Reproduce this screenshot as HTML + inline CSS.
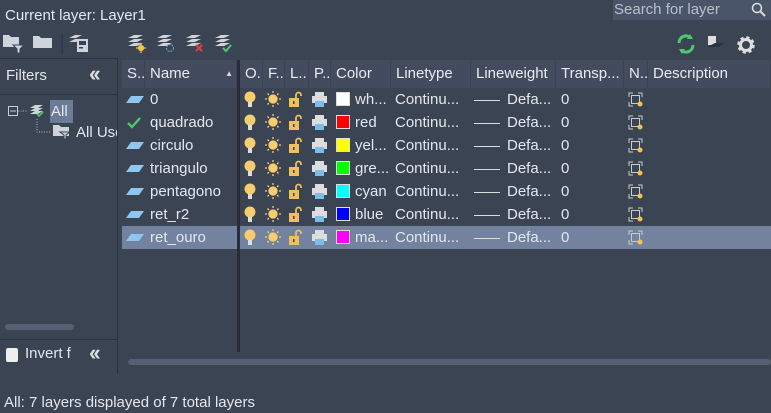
<!DOCTYPE html><html><head><style>
body{margin:0;width:771px;height:413px;background:#3b4453;font-family:"Liberation Sans",sans-serif;color:#e4e8ee;font-size:15px;position:relative;overflow:hidden}
.a{position:absolute;white-space:nowrap}
.hd{position:absolute;top:60px;height:28px;background:#434c5e;line-height:28px;padding-left:5px;box-sizing:border-box;border-right:1px solid #3b4453;color:#e8ebf0;overflow:hidden}
.cell{position:absolute;height:23px;line-height:23px;white-space:nowrap}
.sw{display:inline-block;width:12px;height:12px;border:1px solid #ddd;vertical-align:-2px;margin-right:5px}
.chev{font-size:22px;color:#ddd;font-weight:bold;letter-spacing:-3px}
</style></head><body>
<div class="a" style="left:5px;top:7px">Current layer: Layer1</div>
<div class="a" style="left:613px;top:0;width:158px;height:20px;background:#4b5569;color:#b8c0cc;line-height:20px;padding-left:1px;box-sizing:border-box">Search for layer</div>
<svg class="a" style="left:751px;top:2px" width="16" height="16"><circle cx="6" cy="6" r="4.5" fill="none" stroke="#ddd" stroke-width="1.5"/><line x1="9.5" y1="9.5" x2="14" y2="14" stroke="#ddd" stroke-width="2"/></svg>
<svg class="a" style="left:3px;top:33px" width="90" height="22"><path d="M0 2h6l2 2h8v10H0z" fill="#cfd3da"/><path d="M10 12h11l-4 4v4h-3v-4z" fill="#cfd3da" stroke="#3b4453"/><path d="M30 3h6l2 2h11v10H30z" fill="#cfd3da"/><line x1="59" y1="-4" x2="59" y2="22" stroke="#2b3240"/><path d="M66 5l6-3h7l-6 3z M66 9l6-3h7l-6 3z" fill="#cfd3da"/><rect x="74" y="6" width="11" height="13" fill="#cfd3da"/><rect x="76" y="8" width="7" height="4" fill="#3b4453"/><rect x="76" y="14" width="4" height="1.5" fill="#3b4453"/></svg>
<svg class="a" style="left:127px;top:33px" width="110" height="22"><g fill="#cfd3da"><path d="M1 5l6-3h9l-6 3z M1 9l6-3h9l-6 3z M1 13l6-3h9l-6 3z"/><path d="M30 5l6-3h9l-6 3z M30 9l6-3h9l-6 3z M30 13l6-3h9l-6 3z"/><path d="M59 5l6-3h9l-6 3z M59 9l6-3h9l-6 3z M59 13l6-3h9l-6 3z"/><path d="M88 5l6-3h9l-6 3z M88 9l6-3h9l-6 3z M88 13l6-3h9l-6 3z"/></g><g transform="translate(14,15)" stroke="#f6c24e" stroke-width="1.2"><circle r="2.5" fill="#f6c24e"/><path d="M0-5v2M0 3v2M-5 0h2M3 0h2"/></g><circle cx="43" cy="15" r="3.5" fill="none" stroke="#6ac" stroke-dasharray="2 1"/><path d="M69 12l6 6M75 12l-6 6" stroke="#e04040" stroke-width="2"/><path d="M96 15l3 3 5-6" stroke="#4cc870" stroke-width="2" fill="none"/></svg>
<svg class="a" style="left:676px;top:33px" width="82" height="22"><path d="M3 10a7 7 0 0 1 12-5M17 12a7 7 0 0 1-12 5" stroke="#4cc870" stroke-width="3" fill="none"/><path d="M14 1l3 5-6 0z M6 21l-3-5 6 0z" fill="#4cc870"/><rect x="32" y="3" width="8" height="9" fill="#ddd"/><path d="M31 14h12l5-4H39z" fill="#2b3240"/><g transform="translate(70,12)"><circle r="7" fill="none" stroke="#ddd" stroke-width="3.5" stroke-dasharray="3 2.5"/><circle r="5.5" fill="none" stroke="#ddd" stroke-width="3"/><circle r="2.5" fill="#3b4453"/></g></svg>
<div class="a" style="left:0;top:58px;width:117px;height:315px;border-right:1px solid #2b3240;border-top:1px solid #2b3240"></div>
<div class="a" style="left:0;top:94px;width:117px;border-top:1px solid #2b3240"></div>
<div class="a" style="left:6px;top:67px">Filters</div>
<div class="a chev" style="left:89px;top:61px">‹‹</div>
<svg class="a" style="left:8px;top:101px" width="64" height="40"><rect x="0.5" y="5.5" width="9" height="9" fill="none" stroke="#ccc"/><line x1="2" y1="10" x2="8" y2="10" stroke="#ccc"/><path d="M10 10h10M29 18v13h14" stroke="#bbb" stroke-dasharray="1 1.5" fill="none"/><path d="M22 7l5-3h8l-5 3z M22 10l5-3h8l-5 3z M22 13l5-3h8l-5 3z" fill="#cfd3da"/><path d="M29 13l2 2 4-4" stroke="#4cc870" stroke-width="1.6" fill="none"/><path d="M45 24h6l2 2h8v9H45z" fill="#cfd3da"/><path d="M52 31h10l-4 3v4h-2v-4z" fill="#cfd3da" stroke="#3b4453"/></svg>
<div class="a" style="left:50px;top:100px;width:22px;height:23px;background:#6c7c98;line-height:23px;padding-left:1px">All</div>
<div class="a" style="left:76px;top:124px;width:41px;overflow:hidden">All Use</div>
<div class="a" style="left:5px;top:324px;width:69px;height:6px;border-radius:3px;background:#566074"></div>
<div class="a" style="left:0;top:339px;width:117px;border-top:1px solid #2b3240"></div>
<div class="a" style="left:6px;top:348px;width:12px;height:14px;background:#eee;border-radius:2px"></div>
<div class="a" style="left:25px;top:345px">Invert f</div>
<div class="a chev" style="left:89px;top:340px">‹‹</div>
<div class="hd" style="left:122px;width:23px">S...</div>
<div class="hd" style="left:145px;width:92px">Name<span style="position:absolute;right:3px;font-size:8px;color:#ddd">▲</span></div>
<div class="a" style="left:237px;top:60px;width:3px;height:292px;background:#262c38"></div>
<div class="hd" style="left:240px;width:23px">O..</div>
<div class="hd" style="left:263px;width:22px">F...</div>
<div class="hd" style="left:285px;width:24px">L...</div>
<div class="hd" style="left:309px;width:22px">P...</div>
<div class="hd" style="left:331px;width:60px">Color</div>
<div class="hd" style="left:391px;width:80px">Linetype</div>
<div class="hd" style="left:471px;width:85px">Lineweight</div>
<div class="hd" style="left:556px;width:68px">Transp...</div>
<div class="hd" style="left:624px;width:24px">N..</div>
<div class="hd" style="left:648px;width:123px">Description</div>
<div class="a" style="left:122px;top:226px;width:115px;height:23px;background:#72829f"></div>
<div class="a" style="left:240px;top:226px;width:531px;height:23px;background:#72829f"></div>
<div id="rows"></div>
<script>
var r=[["0","#fff","wh..."],["quadrado","#f00","red"],["circulo","#ff0","yel..."],["triangulo","#0f0","gre..."],["pentagono","#0ff","cyan"],["ret_r2","#00f","blue"],["ret_ouro","#f0f","ma..."]];
var h="";
r.forEach(function(x,i){var t=88+i*23;
var s=i==1?'<svg class="a" style="left:126px;top:'+(t+5)+'px" width="16" height="14"><path d="M2 7l4 4 8-9" stroke="#4cc870" stroke-width="2.4" fill="none"/></svg>':'<svg class="a" style="left:125px;top:'+(t+7)+'px" width="20" height="9"><path d="M1 8l5-7h13l-5 7z" fill="#8ec6f0"/></svg>';
h+=s+'<div class="cell" style="left:150px;top:'+t+'px">'+x[0]+'</div>';
h+='<svg class="a" style="left:243px;top:'+(t+3)+'px" width="90" height="18"><circle cx="7" cy="6" r="5.5" fill="#f7cd70"/><rect x="5" y="11" width="4" height="5" fill="#ddd"/>'+
'<g transform="translate(30,8)" stroke="#f7cd70" stroke-width="1.3"><circle r="4" fill="#f7cd70"/><path d="M0-8v2M0 6v2M-8 0h2M6 0h2M-5.5-5.5l1.4 1.4M4.1 4.1L5.5 5.5M-5.5 5.5l1.4-1.4M4.1-4.1L5.5-5.5"/></g>'+
'<rect x="46" y="7" width="10" height="9" fill="#f0c060"/><path d="M53 7V4a2.5 2.5 0 0 1 5 0v1" stroke="#f0c060" stroke-width="1.8" fill="none"/><rect x="50" y="10" width="1.5" height="3" fill="#3b4453"/>'+
'<rect x="72" y="1" width="9" height="4" fill="#ddd"/><rect x="69" y="5" width="15" height="7" fill="#ddd"/><rect x="72" y="10" width="9" height="6" fill="#7cbce8"/></svg>';
h+='<div class="cell" style="left:336px;top:'+t+'px"><span class="sw" style="background:'+x[1]+'"></span>'+x[2]+'</div>';
h+='<div class="cell" style="left:395px;top:'+t+'px">Continu...</div>';
h+='<div class="a" style="left:474px;top:'+(t+12)+'px;width:26px;border-top:1px solid #ddd"></div><div class="cell" style="left:507px;top:'+t+'px">Defa...</div>';
h+='<div class="cell" style="left:561px;top:'+t+'px">0</div>';
h+='<svg class="a" style="left:628px;top:'+(t+4)+'px" width="18" height="18"><path d="M1 5V1h4M10 1h4v4M1 10v4h4" stroke="#ccc" fill="none"/><rect x="3.5" y="3.5" width="8" height="8" fill="none" stroke="#ccc"/><circle cx="12" cy="12" r="2.5" fill="#f6c24e"/></svg>';
});
document.getElementById("rows").innerHTML=h;
</script>
<div class="a" style="left:128px;top:359px;width:643px;height:6px;border-radius:3px;background:#566074"></div>
<div class="a" style="left:4px;top:394px">All: 7 layers displayed of 7 total layers</div>
</body></html>
